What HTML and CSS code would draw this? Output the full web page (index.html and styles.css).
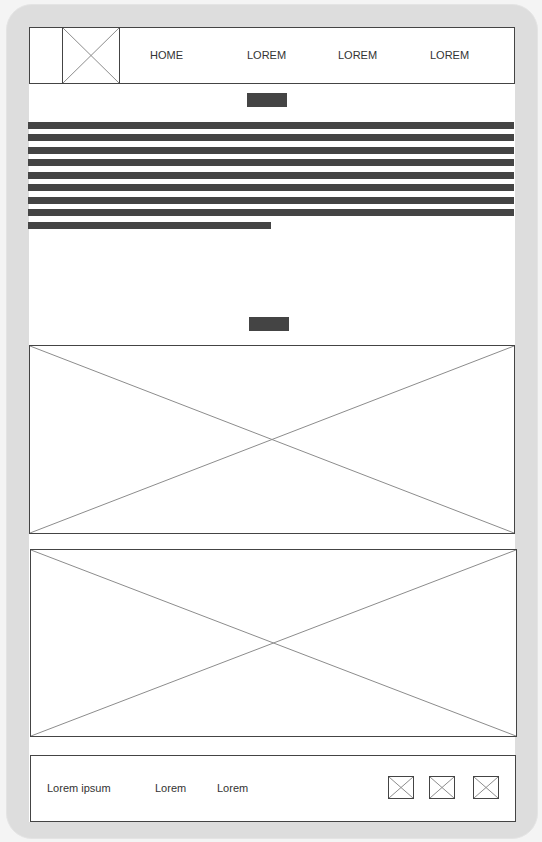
FILE: index.html
```html
<!DOCTYPE html>
<html lang="en">
<head>
<meta charset="utf-8">
<meta name="viewport" content="width=device-width, initial-scale=1">
<title>Wireframe</title>
<link rel="stylesheet" href="styles.css">
</head>
<body>
<div class="device">
  <div class="screen">
    <header class="header">
      <a class="logo" href="#" aria-label="Logo"><svg class="cross" viewBox="0 0 100 100" preserveAspectRatio="none" aria-hidden="true"><path d="M0 0L100 100M0 100L100 0"/></svg></a>
      <nav class="nav">
        <a href="#">HOME</a>
        <a href="#">LOREM</a>
        <a href="#">LOREM</a>
        <a href="#">LOREM</a>
      </nav>
    </header>
    <main>
      <section class="article">
        <div class="heading"></div>
        <div class="lines">
          <div class="line"></div>
          <div class="line"></div>
          <div class="line"></div>
          <div class="line"></div>
          <div class="line"></div>
          <div class="line"></div>
          <div class="line"></div>
          <div class="line"></div>
          <div class="line line-short"></div>
        </div>
      </section>
      <section class="gallery">
        <div class="heading"></div>
        <div class="image image-first"><svg class="cross" viewBox="0 0 100 100" preserveAspectRatio="none" aria-hidden="true"><path d="M0 0L100 100M0 100L100 0"/></svg></div>
        <div class="image image-second"><svg class="cross" viewBox="0 0 100 100" preserveAspectRatio="none" aria-hidden="true"><path d="M0 0L100 100M0 100L100 0"/></svg></div>
      </section>
    </main>
    <footer class="footer">
      <nav class="footer-links">
        <a href="#">Lorem ipsum</a>
        <a href="#">Lorem</a>
        <a href="#">Lorem</a>
      </nav>
      <div class="social">
        <a class="icon" href="#" aria-label="Social link 1"><svg class="cross" viewBox="0 0 100 100" preserveAspectRatio="none" aria-hidden="true"><path d="M0 0L100 100M0 100L100 0"/></svg></a>
        <a class="icon" href="#" aria-label="Social link 2"><svg class="cross" viewBox="0 0 100 100" preserveAspectRatio="none" aria-hidden="true"><path d="M0 0L100 100M0 100L100 0"/></svg></a>
        <a class="icon" href="#" aria-label="Social link 3"><svg class="cross" viewBox="0 0 100 100" preserveAspectRatio="none" aria-hidden="true"><path d="M0 0L100 100M0 100L100 0"/></svg></a>
      </div>
    </footer>
  </div>
</div>
</body>
</html>
```
FILE: styles.css
```css
* {
  box-sizing: border-box;
}

body {
  margin: 0;
  padding: 4px 4px 3px 6px;
  background: #f4f4f4;
  color: #333;
  font: 11px/14px "Liberation Sans", Arial, sans-serif;
}

a {
  color: inherit;
  text-decoration: none;
}

.device {
  padding: 22px;
  border: 1px solid #e4e4e4;
  border-radius: 26px;
  background: #ddd;
}

.screen {
  background: #fff;
}

.cross {
  display: block;
  width: 100%;
  height: 100%;
  fill: none;
  stroke: #8c8c8c;
}

.cross path {
  vector-effect: non-scaling-stroke;
}

.header {
  display: flex;
  height: 57px;
  padding-left: 32px;
  border: 1px solid #444;
}

.logo {
  width: 58px;
  border: solid #444;
  border-width: 0 1px;
}

.nav {
  flex: 1;
  display: grid;
  grid-template-columns: 97fr 91fr 92fr 84fr;
  align-items: center;
  padding: 0 0 2px 30px;
}

.article {
  padding: 9px 0 88px;
}

.heading {
  width: 40px;
  height: 14px;
  background: #444;
}

.article .heading {
  margin-left: 218px;
}

.lines {
  margin: 15px 1px 0 -1px;
}

.line {
  height: 7px;
  margin-bottom: 5px;
  background: #444;
}

.line:nth-child(even) {
  margin-bottom: 6px;
}

.line:last-child {
  margin-bottom: 0;
}

.line-short {
  width: 50%;
}

.gallery .heading {
  margin-left: 220px;
}

.image {
  border: 1px solid #444;
  background: #fff;
}

.image-first {
  height: 189px;
  margin-top: 14px;
}

.image-second {
  height: 188px;
  margin: 15px -2px 18px 1px;
}

.footer {
  display: flex;
  align-items: center;
  justify-content: space-between;
  height: 67px;
  margin: 0 -1px -6px 1px;
  padding: 0 16px 2px;
  border: 1px solid #444;
  background: #fff;
}

.footer-links {
  display: grid;
  grid-template-columns: 108px 62px auto;
}

.social {
  display: grid;
  grid-template-columns: 41px 44px 26px;
}

.icon {
  width: 26px;
  height: 23px;
  border: 1px solid #444;
}
```
